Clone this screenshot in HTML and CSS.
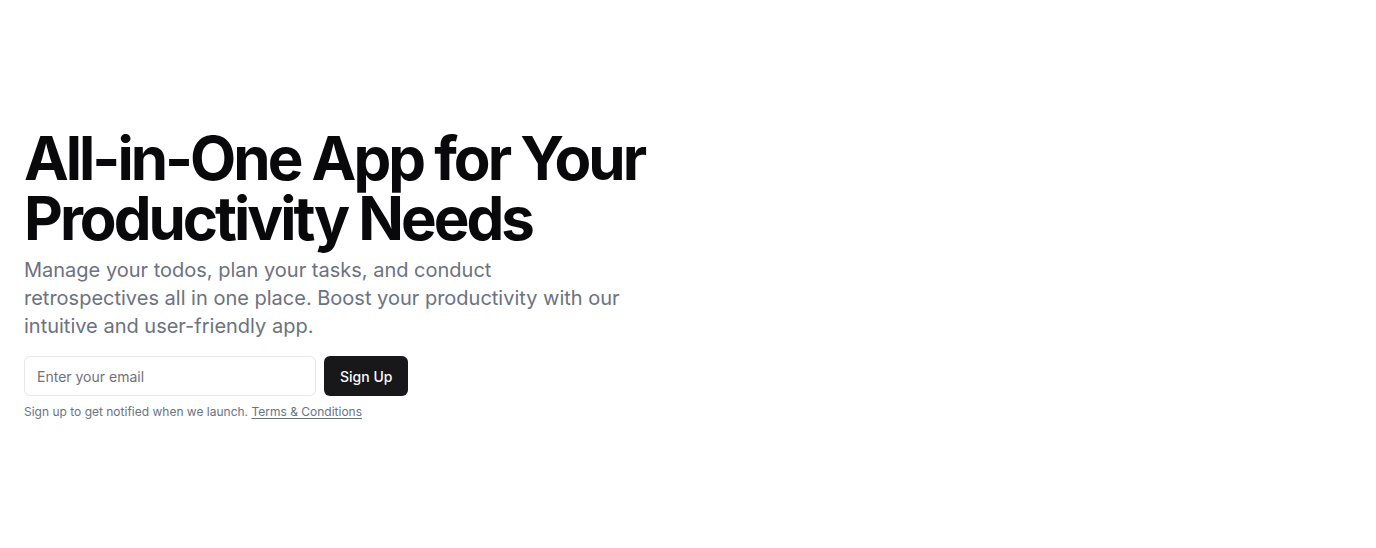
FILE: index.html
```html
<!DOCTYPE html>
<html lang="en">
<head>
<meta charset="utf-8">
<title>All-in-One App</title>
<link rel="stylesheet" href="styles.css">
</head>
<body>
<section class="hero">
  <div class="content">
    <h1 class="title">All-in-One App for Your Productivity Needs</h1>
    <p class="lead">Manage your todos, plan your tasks, and conduct retrospectives all in one place. Boost your productivity with our intuitive and user-friendly app.</p>
    <form class="signup">
      <input class="email" type="email" placeholder="Enter your email">
      <button class="btn" type="button">Sign Up</button>
    </form>
    <p class="note">Sign up to get notified when we launch. <a class="link" href="#">Terms &amp; Conditions</a></p>
  </div>
</section>
</body>
</html>
```
FILE: styles.css
```css
* { box-sizing: border-box; }
html, body { margin: 0; padding: 0; background: #fff; }
body { font-family: Inter, "Noto Sans", sans-serif; color: #09090b; }
.hero {
  min-height: 548px;
  display: flex;
  align-items: center;
  padding: 0 24px;
}
.content { display: flex; flex-direction: column; }
.title {
  margin: 0;
  font-size: 60px;
  line-height: 60px;
  font-weight: 700;
  letter-spacing: -0.05em;
  max-width: 640px;
}
.lead {
  margin: 8px 0 0;
  max-width: 600px;
  font-size: 20px;
  line-height: 28px;
  color: #6b7280;
}
.signup {
  margin-top: 16px;
  display: flex;
  gap: 8px;
}
.email {
  width: 292px;
  height: 40px;
  border: 1px solid #e5e7eb;
  border-radius: 6px;
  padding: 0 12px;
  font-family: inherit;
  font-size: 14px;
  color: #09090b;
  outline: none;
}
.email::placeholder { color: #71717a; }
.btn {
  height: 40px;
  padding: 0 16px;
  border: 0;
  border-radius: 6px;
  background: #18181b;
  color: #fafafa;
  font-family: inherit;
  font-size: 14px;
  font-weight: 500;
}
.note {
  margin: 8px 0 0;
  font-size: 12px;
  line-height: 16px;
  color: #6b7280;
}
.link { color: inherit; text-decoration: underline; text-underline-offset: 2px; }
```
